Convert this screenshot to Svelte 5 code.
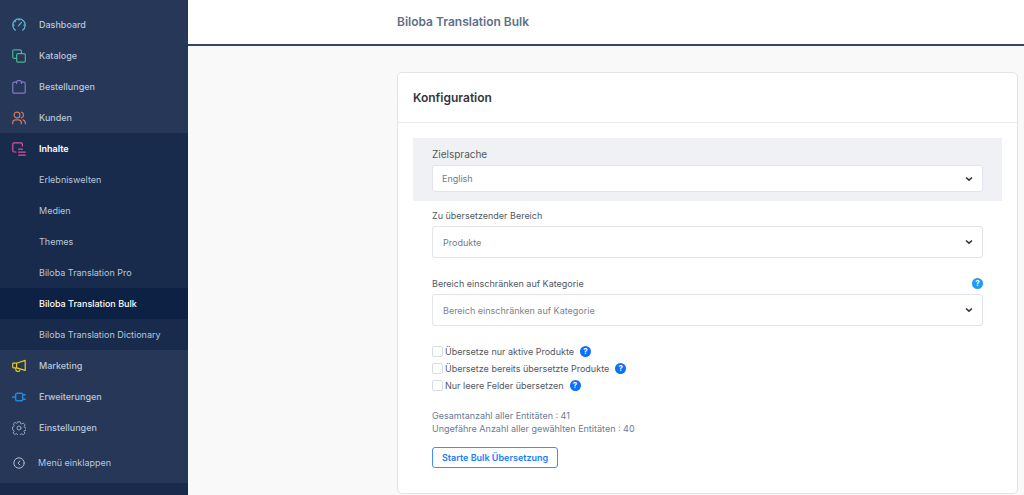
<script>
	const mainMenu = [
		{ label: 'Dashboard', icon: 'dashboard', color: '#56b7d3' },
		{ label: 'Kataloge', icon: 'catalogue', color: '#48b58c' },
		{ label: 'Bestellungen', icon: 'order', color: '#8378c4' },
		{ label: 'Kunden', icon: 'customer', color: '#d5785c' },
		{
			label: 'Inhalte',
			icon: 'content',
			color: '#d852a0',
			children: [
				'Erlebniswelten',
				'Medien',
				'Themes',
				'Biloba Translation Pro',
				'Biloba Translation Bulk',
				'Biloba Translation Dictionary'
			]
		},
		{ label: 'Marketing', icon: 'marketing', color: '#e8cb14' },
		{ label: 'Erweiterungen', icon: 'extension', color: '#2389dc' },
		{ label: 'Einstellungen', icon: 'settings', color: '#9fb0c8' }
	];
	const current = 'Biloba Translation Bulk';

	let options = $state([
		{ id: 'active', label: 'Übersetze nur aktive Produkte', checked: false },
		{ id: 'translated', label: 'Übersetze bereits übersetzte Produkte', checked: false },
		{ id: 'empty', label: 'Nur leere Felder übersetzen', checked: false }
	]);
	let language = $state('English');
	let area = $state('Produkte');
	let category = $state('');
</script>

{#snippet icon(name, color)}
	<svg class="icon" viewBox="0 0 14 14" fill="none" stroke={color} stroke-width="1.2" stroke-linecap="round" stroke-linejoin="round">
		{#if name === 'dashboard'}
			<path d="M3.4 12.2A6.2 6.2 0 1 1 10.6 12.2M6.5 7.8L9.4 4.4M7 1v1.2M2.9 3l.7.7M1 7.2h1.1M13 7.2h-1.1" />
		{:else if name === 'catalogue'}
			<path d="M4.7 9.3H2A1.2 1.2 0 0 1 .8 8.1V2A1.2 1.2 0 0 1 2 .8h6.2A1.2 1.2 0 0 1 9.400 2v2.500" />
			<rect x="4.700" y="4.600" width="8.600" height="8.600" rx="1.200" />
		{:else if name === 'order'}
			<path d="M4.600 2.200H2a1.200 1.200 0 0 0-1.200 1.200v8.600A1.200 1.200 0 0 0 2 13.200h10a1.200 1.200 0 0 0 1.200-1.200V3.400A1.200 1.200 0 0 0 12 2.200H9.400M4.600 3.500V2.200A1.500 1.500 0 0 1 6.100.7h1.800a1.500 1.500 0 0 1 1.500 1.500v1.300" />
		{:else if name === 'customer'}
			<circle cx="5" cy="4" r="2.900" />
			<path d="M.7 12.800v-1.300A3 3 0 0 1 3.700 8.800h2.600a3 3 0 0 1 3 2.700v1.300M9.400 1.200a2.900 2.900 0 0 1 0 5.600M11 8.900a2.900 2.900 0 0 1 2.300 2.700v1.200" />
		{:else if name === 'content'}
			<path d="M4 10H2A1.200 1.200 0 0 1 .8 8.800V2A1.200 1.200 0 0 1 2 .8h7.200A1.200 1.200 0 0 1 10.400 2v2M6.600 7.200h3.800M6.600 10.200h6.600M6.600 13.200h6.600" />
		{:else if name === 'marketing'}
			<path d="M4.600 4.200L13.200 1.400v10L4.600 8.900zM4.600 4.200H1.500a.8.8 0 0 0-.8.8v3.100a.8.8 0 0 0 .8.8h3.100M3.800 9v1.800a1.700 1.700 0 0 0 1.700 1.600h.8a1.600 1.600 0 0 0 1.600-1.600v-.9" />
		{:else if name === 'extension'}
			<path d="M.6 7h3M5 3.200h4.500a1.200 1.200 0 0 1 1.200 1.200v5.200a1.200 1.200 0 0 1-1.200 1.200H5a1.500 1.500 0 0 1-1.400-1.500V4.700A1.500 1.500 0 0 1 5 3.200zM10.700 4.800h2.500M10.700 9.200h2.500" stroke-width="1.500" />
		{:else if name === 'settings'}
			<path d="M5.800.8h2.400l.4 1.700 1.200.5 1.500-.9 1.700 1.700-.9 1.500.4 1.100 1.700.4-.1 2.400-1.700.3-.4 1.100.9 1.500-1.600 1.600-1.500-.9-1.200.5-.4 1.500H5.800l-.4-1.600-1.200-.5-1.500.9-1.600-1.600.9-1.500L1.500 9 .5 8.700V6l1.200-.4.5-1.200-.9-1.500 1.600-1.500 1.500.9 1-.5z" stroke-width=".9" />
			<circle cx="7" cy="7" r="2" stroke-width=".9" />
		{:else if name === 'collapse'}
			<circle cx="7" cy="7" r="5.200" stroke-width="1" />
			<path d="M7.900 5L5.900 7l2 2" stroke-width="1" />
		{/if}
	</svg>
{/snippet}

{#snippet chevron()}
	<svg class="chevron" viewBox="0 0 8 6"><path d="M1 1.500l3 2.600 3-2.600" fill="none" stroke="#33373c" stroke-width="1.600" /></svg>
{/snippet}

<div class="page">
	<aside>
		<nav>
			<ul class="menu">
				{#each mainMenu as item}
					<li class:open={item.children}>
						<a class="main-link" href="#{item.icon}">
							{@render icon(item.icon, item.color)}
							{item.label}
						</a>
						{#if item.children}
							<ul>
								{#each item.children as child}
									<li><a class="sub-link" class:current={child === current} href="#{item.icon}">{child}</a></li>
								{/each}
							</ul>
						{/if}
					</li>
				{/each}
			</ul>
			<button class="collapse" type="button">
				{@render icon('collapse', '#b3c0d3')}
				Menü einklappen
			</button>
		</nav>
	</aside>

	<main>
		<header>
			<h1>Biloba Translation Bulk</h1>
		</header>

		<section class="card">
			<h2>Konfiguration</h2>
			<form class="card-body">
				<div class="language">
					<label for="language">Zielsprache</label>
					<div class="select small">
						<select id="language" bind:value={language}>
							<option>English</option>
						</select>
						{@render chevron()}
					</div>
				</div>

				<div class="field">
					<label for="area">Zu übersetzender Bereich</label>
					<div class="select">
						<select id="area" bind:value={area}>
							<option>Produkte</option>
						</select>
						{@render chevron()}
					</div>
				</div>

				<div class="field category">
					<div class="label-row">
						<label for="category">Bereich einschränken auf Kategorie</label>
						<button class="help light" type="button" aria-label="Hilfe">?</button>
					</div>
					<div class="select">
						<select id="category" class="placeholder" bind:value={category}>
							<option value="">Bereich einschränken auf Kategorie</option>
						</select>
						{@render chevron()}
					</div>
				</div>

				<div class="options">
					{#each options as option}
						<div class="option">
							<input type="checkbox" id={option.id} bind:checked={option.checked} />
							<label for={option.id}>{option.label}</label>
							<button class="help" type="button" aria-label="Hilfe">?</button>
						</div>
					{/each}
				</div>

				<p>Gesamtanzahl aller Entitäten : 41</p>
				<p>Ungefähre Anzahl aller gewählten Entitäten : 40</p>

				<button class="start" type="button">Starte Bulk Übersetzung</button>
			</form>
		</section>
	</main>
</div>

<style>
	:global(body) {
		background: #f9f9f9;
	}

	.page {
		display: grid;
		grid-template-columns: 188px 1fr;
		min-height: 100vh;
		font-family: Inter, sans-serif;
		font-size: 9px;
		color: #52585f;
	}

	aside {
		background: #182b4d;
	}

	nav {
		background: #263758;
		padding: 9px 0 5px;
	}

	ul {
		list-style: none;
		margin: 0;
		padding: 0;
	}

	a,
	.collapse {
		display: flex;
		align-items: center;
		height: 31px;
		color: #bac7da;
		text-decoration: none;
	}

	.main-link {
		gap: 13px;
		padding-left: 12px;
		font-weight: 500;
	}

	.sub-link {
		padding-left: 39px;
	}

	.open {
		background: #182b4d;
	}

	.open .main-link {
		color: #fff;
		font-weight: 600;
	}

	.sub-link.current {
		background: #0d2144;
		color: #fff;
		font-weight: 500;
	}

	.collapse {
		gap: 12px;
		width: 100%;
		margin-top: 4px;
		padding: 0 0 0 12px;
		border: none;
		background: none;
		font: inherit;
	}

	.icon {
		width: 14px;
		height: 14px;
		flex: none;
	}

	main {
		min-width: 0;
	}

	header {
		padding: 0 6px 0 209px;
		background: #fff;
		border-bottom: 2px solid #2f4665;
	}

	h1 {
		margin: 0;
		font-size: 12px;
		line-height: 44px;
		font-weight: 600;
		color: #607087;
	}

	.card {
		margin: 26px 6px 1px 209px;
		border: 1px solid #e2e4e8;
		border-radius: 5px;
		background: #fff;
	}

	h2 {
		margin: 0;
		padding: 0 15px;
		border-bottom: 1px solid #e8e9eb;
		font-size: 12px;
		line-height: 49px;
		font-weight: 600;
		color: #33373c;
	}

	.card-body {
		padding: 15px 15px 25px;
	}

	.language {
		padding: 9px 19px;
		background: #f0f1f5;
	}

	.language label {
		display: block;
		font-size: 10px;
		line-height: 14px;
		margin-bottom: 4px;
	}

	.field {
		margin: 9px 19px 0;
	}

	.field label {
		display: block;
		line-height: 12px;
		margin-bottom: 4px;
	}

	.category {
		margin-top: 20px;
	}

	.label-row {
		display: flex;
		justify-content: space-between;
	}

	.select {
		position: relative;
	}

	select {
		display: block;
		box-sizing: border-box;
		width: 100%;
		height: 32px;
		padding: 0 24px 0 10px;
		border: 1px solid #e1e5eb;
		border-radius: 3px;
		appearance: none;
		background: #fff;
		font: inherit;
		color: #6b7c93;
	}

	.small select {
		height: 27px;
		padding-left: 9px;
	}

	select.placeholder {
		color: #7d848d;
	}

	.chevron {
		position: absolute;
		top: calc(50% - 3px);
		right: 10px;
		width: 8px;
		height: 6px;
		pointer-events: none;
	}

	.help {
		width: 11px;
		height: 11px;
		padding: 0;
		border: none;
		border-radius: 50%;
		background: #0b70ff;
		font: 700 8px/11px Inter, sans-serif;
		color: #fff;
	}

	.help.light {
		background: #189eff;
	}

	.options {
		margin: 17px 19px 15px;
	}

	.option {
		display: flex;
		align-items: center;
		height: 17px;
	}

	.option input {
		box-sizing: border-box;
		width: 11px;
		height: 11px;
		margin: 0 2px 0 0;
		border: 1px solid #d8dde4;
		border-radius: 2px;
		appearance: none;
		background: #fff;
	}

	.option input:checked {
		background: #189eff;
	}

	.option .help {
		margin-left: 6px;
	}

	p {
		margin: 0 19px;
		line-height: 13px;
		color: #6b7c93;
	}

	.start {
		height: 21px;
		margin: 12px 19px 0;
		padding: 0 9px;
		border: 1px solid #3d8fff;
		border-radius: 3px;
		background: #fff;
		font: inherit;
		font-weight: 600;
		color: #1a7cff;
	}
</style>
